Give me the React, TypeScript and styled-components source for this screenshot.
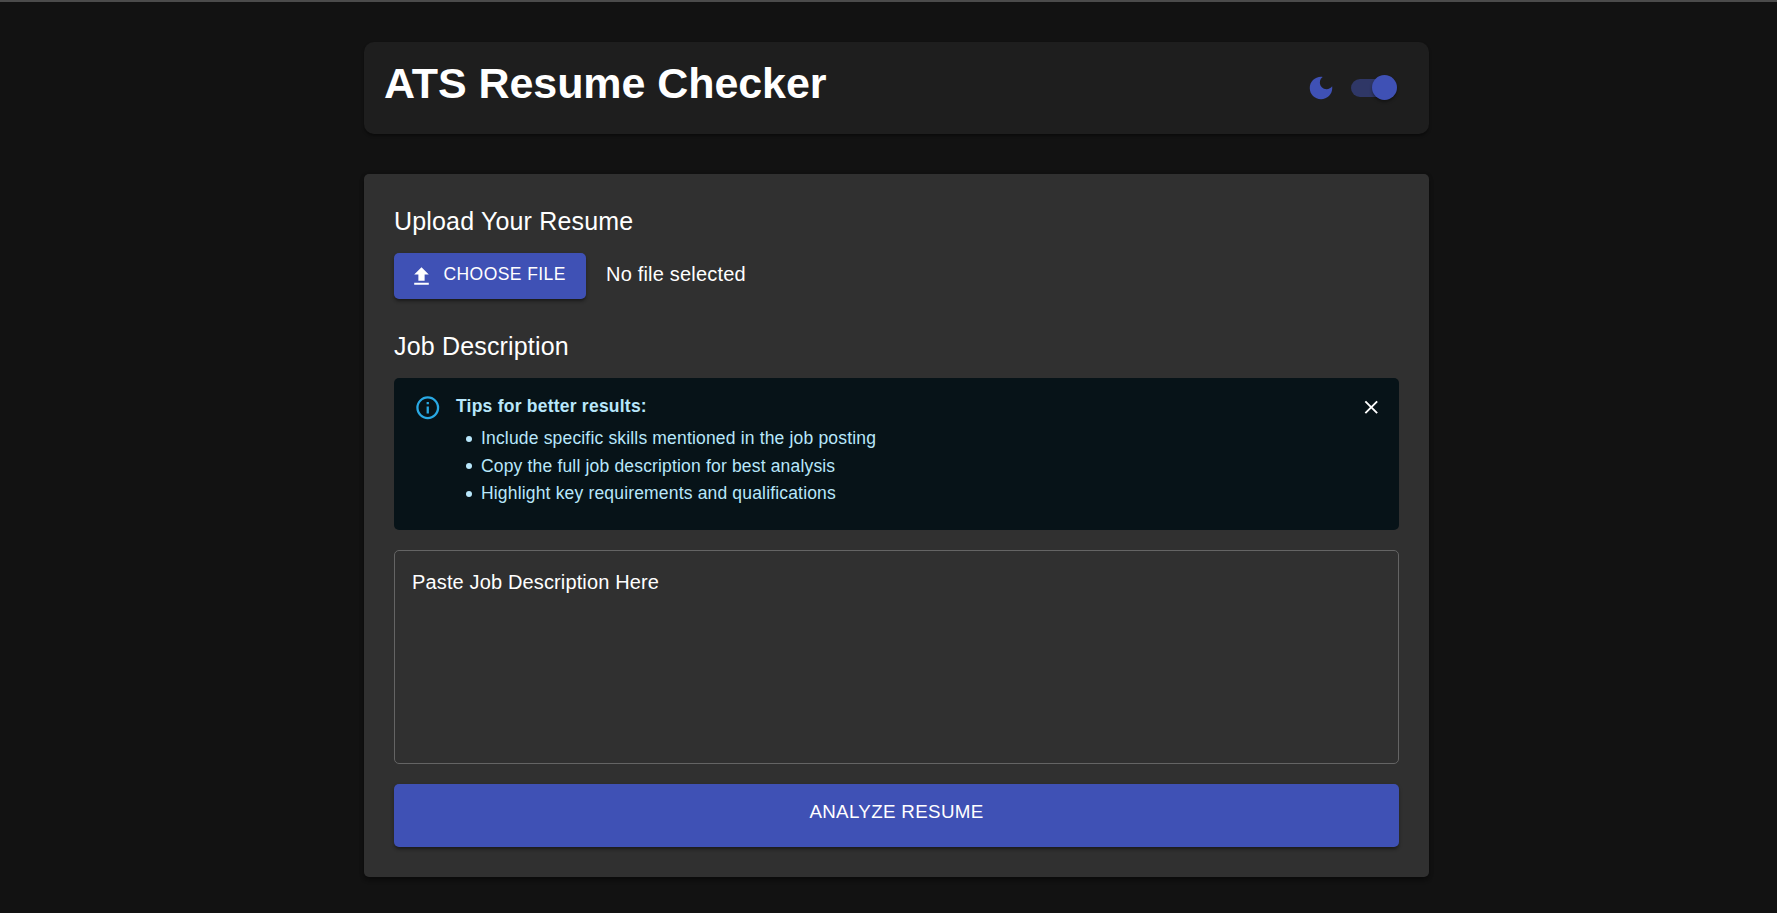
import React, { useState } from "react";
import styled, { createGlobalStyle } from "styled-components";

const GlobalStyle = createGlobalStyle`
  *, *::before, *::after { box-sizing: border-box; }
  body {
    margin: 0;
    background: #121212;
    color: #fff;
    font-family: "Liberation Sans", Helvetica, Arial, sans-serif;
  }
`;

const Page = styled.main`
  min-height: 913px;
  padding: 40px 0 0 16px;
  border-top: 2px solid #4b4b4b;
`;

const Container = styled.div`
  width: 1065px;
  margin: 0 auto;
  display: flex;
  flex-direction: column;
  gap: 40px;
`;

const Header = styled.header`
  height: 92px;
  padding: 0 20px;
  display: flex;
  justify-content: space-between;
  align-items: center;
  border-radius: 10px;
  background: #1e1e1e;
  box-shadow: 0 2px 3px rgba(0, 0, 0, 0.4);
`;

const Title = styled.h1`
  margin: 0;
  padding-bottom: 11px;
  font-size: 43px;
  line-height: 52px;
  font-weight: 700;
  letter-spacing: -0.07px;
`;

const ThemeControl = styled.div`
  display: flex;
  align-items: center;
  gap: 15px;
  padding-right: 12px;
`;

const Icon = styled.svg<{ $size: number; $color?: string }>`
  display: block;
  flex: none;
  width: ${({ $size }) => $size}px;
  height: ${({ $size }) => $size}px;
  fill: ${({ $color }) => $color ?? "currentColor"};
`;

const Switch = styled.button<{ $on: boolean }>`
  width: 46px;
  height: 25px;
  margin-bottom: 1px;
  padding: 0;
  border: 0;
  display: flex;
  align-items: center;
  justify-content: ${({ $on }) => ($on ? "flex-end" : "flex-start")};
  background: none;
  position: relative;

  &::before {
    content: "";
    position: absolute;
    left: 0;
    top: 4px;
    width: 42.5px;
    height: 18px;
    border-radius: 9px;
    background: #2f3766;
  }
`;

const Thumb = styled.span`
  position: relative;
  width: 25px;
  height: 25px;
  border-radius: 50%;
  background: #3f51b5;
  box-shadow: 0 2px 3px rgba(0, 0, 0, 0.35);
`;

const Card = styled.section`
  height: 703px;
  padding: 30px;
  border-radius: 5px;
  background: #303030;
  box-shadow: 0 3px 4px rgba(0, 0, 0, 0.35), 0 1px 5px rgba(0, 0, 0, 0.15);
`;

const SectionTitle = styled.h2`
  margin: 0 0 14px;
  font-size: 25px;
  line-height: 35px;
  font-weight: 400;
  letter-spacing: 0.17px;
`;

const UploadRow = styled.div`
  display: flex;
  align-items: center;
  gap: 20px;
  margin-bottom: 30px;
`;

const Button = styled.button<{ $large?: boolean }>`
  width: ${({ $large }) => ($large ? "100%" : "192px")};
  height: ${({ $large }) => ($large ? 63 : 46)}px;
  padding: 0 15px;
  border: 0;
  border-radius: 5px;
  display: flex;
  align-items: center;
  justify-content: ${({ $large }) => ($large ? "center" : "flex-start")};
  gap: 9.5px;
  background: #3f51b5;
  color: #fff;
  font-family: inherit;
  font-size: ${({ $large }) => ($large ? 18.75 : 17.5)}px;
  letter-spacing: ${({ $large }) => ($large ? 0.34 : 0.42)}px;
  white-space: nowrap;
  box-shadow: 0 3px 3px -1px rgba(0, 0, 0, 0.3), 0 2px 4px rgba(0, 0, 0, 0.2);
`;

const ButtonLabel = styled.span<{ $lift: number }>`
  padding-bottom: ${({ $lift }) => $lift}px;
`;

const FileStatus = styled.span`
  padding-bottom: 4px;
  font-size: 20px;
  letter-spacing: 0.19px;
`;

const Alert = styled.div`
  height: 152px;
  padding: 15px 17px 0 20px;
  margin-bottom: 20px;
  display: flex;
  align-items: flex-start;
  border-radius: 5px;
  background: #071318;
  color: #b8e7fb;
`;

const AlertIcon = styled.span`
  padding-top: 1px;
`;

const AlertBody = styled.div`
  flex: 1;
  margin-left: 14.5px;
  font-size: 17.5px;
  letter-spacing: 0.17px;
`;

const TipsTitle = styled.strong`
  display: block;
  line-height: 26px;
  letter-spacing: 0.23px;
`;

const Tips = styled.ul`
  margin: 6px 0 0;
  padding-left: 10px;
  list-style: none;
`;

const Tip = styled.li`
  display: flex;
  align-items: center;
  gap: 9px;
  line-height: 27.5px;

  &::before {
    content: "";
    width: 6px;
    height: 6px;
    border-radius: 50%;
    background: currentColor;
  }
`;

const CloseButton = styled.button`
  margin-top: 3px;
  padding: 0;
  border: 0;
  background: none;
  color: #fff;
`;

const Description = styled.textarea`
  display: block;
  width: 100%;
  height: 214px;
  margin: 0 0 20px;
  padding: 17px 17px;
  border: 1px solid #646464;
  border-radius: 5px;
  outline: none;
  resize: none;
  background: transparent;
  color: #fff;
  font-family: inherit;
  font-size: 20px;
  line-height: 28px;
  letter-spacing: 0.14px;

  &::placeholder {
    color: #fff;
    opacity: 1;
  }
`;

const PATHS = {
  moon: "M12 3c-4.97 0-9 4.03-9 9s4.03 9 9 9 9-4.03 9-9c0-.46-.04-.92-.1-1.36-.98 1.37-2.58 2.26-4.4 2.26-2.98 0-5.4-2.42-5.4-5.4 0-1.81.89-3.42 2.26-4.4-.44-.06-.9-.1-1.36-.1z",
  upload: "M5 20h14v-2H5v2zm0-10h4v6h6v-6h4l-7-7-7 7z",
  info: "M11 9h2V7h-2m1 13c-4.41 0-8-3.59-8-8s3.59-8 8-8 8 3.59 8 8-3.59 8-8 8m0-18A10 10 0 0 0 2 12a10 10 0 0 0 10 10 10 10 0 0 0 10-10A10 10 0 0 0 12 2m-1 15h2v-6h-2v6z",
  close: "M19 6.41 17.59 5 12 10.59 6.41 5 5 6.41 10.59 12 5 17.59 6.41 19 12 13.41 17.59 19 19 17.59 13.41 12z",
};

function Glyph({ name, size, color }: { name: keyof typeof PATHS; size: number; color?: string }) {
  return (
    <Icon viewBox="0 0 24 24" $size={size} $color={color} aria-hidden>
      <path d={PATHS[name]} />
    </Icon>
  );
}

const TIPS = [
  "Include specific skills mentioned in the job posting",
  "Copy the full job description for best analysis",
  "Highlight key requirements and qualifications",
];

export default function App() {
  const [dark, setDark] = useState(true);
  const [showTips, setShowTips] = useState(true);

  return (
    <>
      <GlobalStyle />
      <Page>
        <Container>
          <Header>
            <Title>ATS Resume Checker</Title>
            <ThemeControl>
              <Glyph name="moon" size={30} color="#3f51b5" />
              <Switch $on={dark} onClick={() => setDark(!dark)} aria-label="Dark mode">
                <Thumb />
              </Switch>
            </ThemeControl>
          </Header>
          <Card>
            <SectionTitle>Upload Your Resume</SectionTitle>
            <UploadRow>
              <Button>
                <Glyph name="upload" size={25} />
                <ButtonLabel $lift={4}>CHOOSE FILE</ButtonLabel>
              </Button>
              <FileStatus>No file selected</FileStatus>
            </UploadRow>
            <SectionTitle>Job Description</SectionTitle>
            {showTips && (
              <Alert>
                <AlertIcon>
                  <Glyph name="info" size={27.5} color="#29a9e4" />
                </AlertIcon>
                <AlertBody>
                  <TipsTitle>Tips for better results:</TipsTitle>
                  <Tips>
                    {TIPS.map((tip) => (
                      <Tip key={tip}>{tip}</Tip>
                    ))}
                  </Tips>
                </AlertBody>
                <CloseButton onClick={() => setShowTips(false)} aria-label="Close">
                  <Glyph name="close" size={22.5} />
                </CloseButton>
              </Alert>
            )}
            <Description placeholder="Paste Job Description Here" />
            <Button $large>
              <ButtonLabel $lift={6.5}>ANALYZE RESUME</ButtonLabel>
            </Button>
          </Card>
        </Container>
      </Page>
    </>
  );
}
